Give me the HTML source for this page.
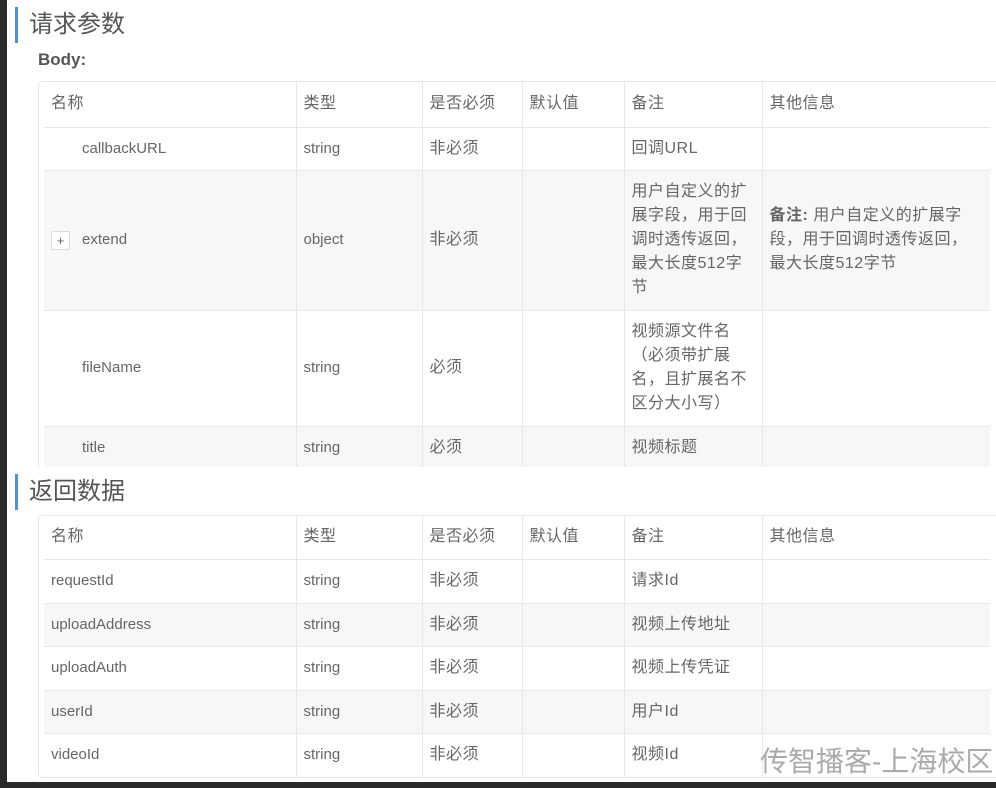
<!DOCTYPE html>
<html><head><meta charset="utf-8"><style>
*{margin:0;padding:0;box-sizing:border-box}
body{width:996px;height:788px;background:#fff;position:relative;overflow:hidden;font-family:"Liberation Sans","Noto Sans CJK SC",sans-serif;color:#666;font-size:15px}
.lstrip{position:absolute;left:0;top:0;width:7px;height:788px;background:#2b2b2b}
.bstrip{position:absolute;left:0;top:782px;width:996px;height:6px;background:#2b2b2b}
h2{position:absolute;left:15px;font-weight:normal;font-size:24px;color:#555;border-left:3px solid #3a9be6;padding-left:11px;height:36px;line-height:36px}
.body{position:absolute;left:38px;top:50px;font-weight:bold;font-size:17px;color:#555}
.box{position:absolute;left:38px;width:970px;border:1px solid #e6e6e6;border-radius:4px;overflow:hidden;background:#fff}
table{position:absolute;left:5px;border-collapse:collapse;table-layout:fixed;width:946px}
td{border-bottom:1px solid #e8e8e8;border-right:1px solid #e8e8e8;padding:0 7px;vertical-align:middle;line-height:24px}
td:last-child{border-right:none}
tr.g td{background:#f7f7f7}
.c{font-size:16px;letter-spacing:0.5px}
.plus{display:inline-block;width:19px;height:19px;border:1px solid #ddd;background:#fff;text-align:center;line-height:17px;font-size:13px;margin-right:12px;vertical-align:middle}
.wm{position:absolute;left:760px;top:740px;font-size:28px;color:#aaa}
</style></head><body>
<div class="lstrip"></div>
<h2 style="top:7px">请求参数</h2>
<div class="body">Body:</div>
<div class="box" style="top:81px;height:386px;border-bottom:none">
<table style="top:0">
<colgroup><col style="width:252px"><col style="width:126px"><col style="width:100px"><col style="width:102px"><col style="width:138px"><col style="width:228px"></colgroup>
<tr style="height:45px" class="c"><td class="c">名称</td><td class="c">类型</td><td class="c">是否必须</td><td class="c">默认值</td><td class="c">备注</td><td class="c">其他信息</td></tr>
<tr style="height:43px"><td style="padding-left:38px">callbackURL</td><td>string</td><td class="c">非必须</td><td></td><td class="c">回调URL</td><td></td></tr>
<tr class="g" style="height:140px"><td><span class="plus">+</span>extend</td><td>object</td><td class="c">非必须</td><td></td><td class="c">用户自定义的扩展字段，用于回调时透传返回，最大长度512字节</td><td class="c"><b>备注:</b> 用户自定义的扩展字段，用于回调时透传返回，最大长度512字节</td></tr>
<tr style="height:116px"><td style="padding-left:38px">fileName</td><td>string</td><td class="c">必须</td><td></td><td class="c">视频源文件名（必须带扩展名，且扩展名不区分大小写）</td><td></td></tr>
<tr class="g" style="height:44px"><td style="padding-left:38px">title</td><td>string</td><td class="c">必须</td><td></td><td class="c">视频标题</td><td></td></tr>
</table></div>
<h2 style="top:474px">返回数据</h2>
<div class="box" style="top:515px;height:263px">
<table style="top:0">
<colgroup><col style="width:252px"><col style="width:126px"><col style="width:100px"><col style="width:102px"><col style="width:138px"><col style="width:228px"></colgroup>
<tr style="height:43px"><td class="c">名称</td><td class="c">类型</td><td class="c">是否必须</td><td class="c">默认值</td><td class="c">备注</td><td class="c">其他信息</td></tr>
<tr style="height:44px"><td>requestId</td><td>string</td><td class="c">非必须</td><td></td><td class="c">请求Id</td><td></td></tr>
<tr class="g" style="height:43px"><td>uploadAddress</td><td>string</td><td class="c">非必须</td><td></td><td class="c">视频上传地址</td><td></td></tr>
<tr style="height:44px"><td>uploadAuth</td><td>string</td><td class="c">非必须</td><td></td><td class="c">视频上传凭证</td><td></td></tr>
<tr class="g" style="height:43px"><td>userId</td><td>string</td><td class="c">非必须</td><td></td><td class="c">用户Id</td><td></td></tr>
<tr style="height:44px"><td style="border-bottom:none">videoId</td><td style="border-bottom:none">string</td><td class="c" style="border-bottom:none">非必须</td><td style="border-bottom:none"></td><td class="c" style="border-bottom:none">视频Id</td><td style="border-bottom:none"></td></tr>
</table></div>
<div class="wm">传智播客-上海校区</div>
<div class="bstrip"></div>
</body></html>
